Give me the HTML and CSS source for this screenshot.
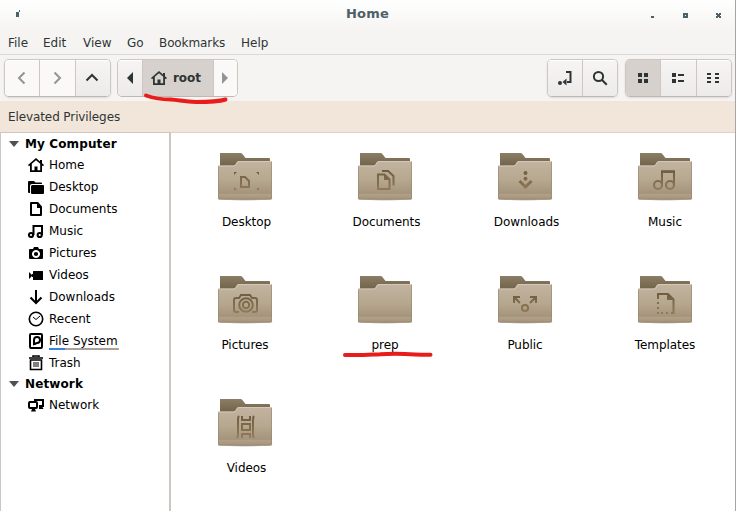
FILE: index.html
```
<!DOCTYPE html>
<html lang="en">
<head>
<meta charset="utf-8">
<title>Home</title>
<link rel="stylesheet" href="styles.css">
</head>
<body>
<svg class="defs" width="0" height="0" aria-hidden="true">
  <defs>
    <linearGradient id="front" x1="0" y1="0" x2="0" y2="1"><stop offset="0" stop-color="#c2b4a0"/><stop offset=".5" stop-color="#b6a78f"/><stop offset=".84" stop-color="#a5947b"/><stop offset=".87" stop-color="#b0a087"/><stop offset="1" stop-color="#a59379"/></linearGradient>
    <linearGradient id="back" x1="0" y1="0" x2="0" y2="1"><stop offset="0" stop-color="#8c7d66"/><stop offset=".3" stop-color="#716349"/><stop offset="1" stop-color="#716349"/></linearGradient>
    <linearGradient id="ink" gradientUnits="userSpaceOnUse" x1="0" y1="20" x2="0" y2="42"><stop offset="0" stop-color="#6f5c40"/><stop offset="1" stop-color="#937d5c"/></linearGradient>
    <radialGradient id="shade"><stop offset="0" stop-color="#555" stop-opacity=".7"/><stop offset=".75" stop-color="#666" stop-opacity=".4"/><stop offset="1" stop-color="#888" stop-opacity="0"/></radialGradient>
  </defs>
  <symbol id="folder" viewBox="0 0 60 54">
    <ellipse cx="30" cy="49" rx="30" ry="1.800" fill="url(#shade)"/>
    <path d="M5 3h20.500q1 0 1.700.8L30.500 8H54q1 0 1 1v38H5z" fill="url(#back)"/>
    <path d="M3 16.500q0-1 1-1h14q1.800 0 2.600-1.500l1.200-2q.6-1 1.800-1H56q1 0 1 1v36q0 1.500-1.500 1.500h-51Q3 49.500 3 48z" fill="url(#front)"/>
    <path d="M3.500 16h15q1.800 0 2.600-1.500l1.200-2q.6-1 1.700-1h32" fill="none" stroke="#d6cbbb" stroke-width=".9"/>
    <path d="M3.500 16.500V48q0 1 1 1h51q1 0 1-1V12" fill="none" stroke="#94846b" stroke-width=".8" opacity=".7"/>
  </symbol>
  <symbol id="home" viewBox="0 0 16 16"><path d="M8 1 0 8l1 1.200 1-.8V15h12V8.400l1 .8L16 8l-2-1.800V3h-2v1.500zM8 3.200l4.200 3.600V13.200H9.500V9.500h-3v3.700H3.800V6.800z"/></symbol>
</svg>
<div class="window">
  <header class="titlebar">
    <svg class="pin" width="6" height="8" viewBox="0 0 6 8"><path d="M0 2h3v5H0zM3 0h1v2H3z" fill="#4d6068"/></svg>
    <h1>Home</h1>
    <div class="controls">
      <svg width="5" height="5"><path d="M1 3h3v2H1z"/></svg>
      <svg width="5" height="5"><path fill-rule="evenodd" d="M0 0h5v5H0zM2 2v1h1V2z"/></svg>
      <svg width="5" height="5"><path d="M0 0h2v1h1V0h2v2H4v1h1v2H3V4H2v1H0V3h1V2H0z"/></svg>
    </div>
  </header>
  <nav class="menubar"><span class="m-file">File</span><span class="m-edit">Edit</span><span class="m-view">View</span><span class="m-go">Go</span><span class="m-book">Bookmarks</span><span>Help</span></nav>
  <div class="toolbar">
    <div class="group nav">
      <button class="flat"><svg width="16" height="16"><path d="m10.500 2.500-5.500 5.500 5.500 5.500" class="line dim"/></svg></button>
      <button class="flat"><svg width="16" height="16"><path d="m5.500 2.500 5.500 5.500-5.500 5.500" class="line dim"/></svg></button>
      <button><svg width="16" height="16"><path d="m1.500 10.500 5.500-5.500 5.500 5.500" class="line"/></svg></button>
    </div>
    <div class="group path">
      <button class="arrow"><svg width="8" height="12"><path d="M7 0v12L1 6z"/></svg></button>
      <button class="active crumb"><svg width="16" height="16"><use href="#home"/></svg><b>root</b></button>
      <button class="arrow flat"><svg width="8" height="12"><path d="M0 0v12l6-6z" fill="#929595"/></svg></button>
    </div>
    <div class="group tools">
      <button><svg width="16" height="16"><circle cx="3" cy="13" r="2"/><path d="M9 2h4.500v10H10" class="line"/><path d="m5.500 12 4-3.500v7z"/></svg></button>
      <button><svg width="16" height="16"><circle cx="6.500" cy="6.500" r="4.600" class="line"/><path d="m10 10 4.800 4.800" class="line"/></svg></button>
    </div>
    <div class="group views">
      <button class="active"><svg width="16" height="16"><path d="M3 3h4v4H3zm6 0h4v4H9zM3 9h4v4H3zm6 0h4v4H9z"/></svg></button>
      <button><svg width="16" height="16"><path d="M2 3h4v4H2zm6 1h6v2H8zM2 9h4v4H2zm6 1h6v2H8z"/></svg></button>
      <button><svg width="16" height="16"><path d="M1 3h4v2H1zm8 0h4v2H9zM1 7h4v2H1zm8 0h4v2H9zm-8 4h4v2H1zm8 0h4v2H9z"/></svg></button>
    </div>
  </div>
  <div class="infobar">Elevated Privileges</div>
  <div class="content">
    <aside>
      <h2><i></i>My Computer</h2>
      <ul>
        <li><svg width="16" height="16"><use href="#home"/></svg>Home</li>
        <li><svg width="16" height="16"><path d="M0 3q0-1 1-1h5l1.500 1.500H13q1 0 1 1V5H4Q2 5 2 7v7H1q-1 0-1-1zM3 7.500Q3 6 4.500 6H15q1 0 1 1v7q0 1-1 1H4q-1 0-1-1z"/></svg>Desktop</li>
        <li><svg width="16" height="16"><path fill-rule="evenodd" d="M3 1h7l4 4.500V14q0 1-1 1H3q-1 0-1-1V2q0-1 1-1zm1 2v10h8V7H9V3z"/></svg>Documents</li>
        <li><svg width="16" height="16"><path d="M5.500 12V3H14v9" class="line"/><circle cx="3" cy="12" r="2.100" class="line"/><circle cx="11.700" cy="12" r="2.100" class="line"/></svg>Music</li>
        <li><svg width="16" height="16"><path fill-rule="evenodd" d="M2 4h3l1-2h4l1 2h3q1 0 1 1v8q0 1-1 1H2q-1 0-1-1V5q0-1 1-1zm6 1a4 4 0 1 0 .01 0z"/><circle cx="8" cy="9" r="2.100"/></svg>Pictures</li>
        <li><svg width="16" height="16"><path d="M1 5l3 3V7h1V4.500Q5 4 5.500 4h9q.5 0 .5.500v8q0 .5-.5.500h-9q-.5 0-.5-.5V10H4V9l-3 3z"/></svg>Videos</li>
        <li><svg width="16" height="16"><path d="M8 1v12M2.500 8.500 8 14l5.500-5.500" class="line"/></svg>Downloads</li>
        <li><svg width="16" height="16"><circle cx="8" cy="8" r="6.700" class="line thin"/><path d="m5 6 3 2.500 4-3.500" class="line fine"/></svg>Recent</li>
        <li><svg width="16" height="16"><rect x="2" y="1" width="12" height="14" rx="1" class="line"/><path d="M6 11V7a3 3 0 1 1 3 3z" class="line"/><path d="M5 9v3h3z"/></svg><span class="usage">File System</span></li>
        <li><svg width="16" height="16"><path d="M1 3h14M5 2V1h6v1M2.500 5v9.500h11V5z" class="line thin"/><path d="M6 7v5M8 7v5M10 7v5" class="line fine"/></svg>Trash</li>
      </ul>
      <h2><i></i>Network</h2>
      <ul><li><svg width="16" height="16"><path d="M7 5V3h8v6h-4" class="line"/><rect x="1" y="5" width="8" height="6" rx="1" class="line"/><path d="M4 12h3l1 2.500H3zM11 9h3l1.500 3H11z"/></svg>Network</li></ul>
    </aside>
    <main>
      <figure><svg width="60" height="54"><use href="#folder"/><g class="ink"><path d="M26 27h4l4 4v6h-8z"/><path d="M19 25v-3h3zM41 22h3v3zM19 37v3h3zM44 37v3h-3z" class="solid"/></g></svg><figcaption>Desktop</figcaption></figure>
      <figure><svg width="60" height="54"><use href="#folder"/><g class="ink"><path d="M23 24.500h6.500l5 5V39H23zM27 21h6l5.500 5v9.500"/><path d="M29 24v6h6z" class="solid"/></g></svg><figcaption>Documents</figcaption></figure>
      <figure><svg width="60" height="54"><use href="#folder"/><g class="ink"><circle cx="30.500" cy="23" r="2" class="solid"/><circle cx="30.500" cy="28.700" r="2" class="solid"/><path d="m24.500 31 6 6 6-6" class="thick"/></g></svg><figcaption>Downloads</figcaption></figure>
      <figure class="left"><svg width="60" height="54"><use href="#folder"/><g class="ink"><path d="M27 35V21.200h12V35M27 22h12"/><circle cx="23" cy="35" r="4"/><circle cx="35" cy="35" r="4"/></g></svg><figcaption>Music</figcaption></figure>
      <figure class="left"><svg width="60" height="54"><use href="#folder"/><g class="ink"><path d="M24 39h-3q-2 0-2-2V27q0-2 2-2h3l2-3h9l2 3h3q2 0 2 2v10q0 2-2 2h-3"/><circle cx="31" cy="32" r="6.800"/><circle cx="31" cy="32" r="3.200"/></g></svg><figcaption>Pictures</figcaption></figure>
      <figure class="left"><svg width="60" height="54"><use href="#folder"/></svg><figcaption>prep</figcaption></figure>
      <figure class="left"><svg width="60" height="54"><use href="#folder"/><g class="ink"><circle cx="30" cy="35" r="3.100"/><path d="m25 30-6-6M19 30v-6h6M35 30l6-6M35 24h6v6"/></g></svg><figcaption>Public</figcaption></figure>
      <figure class="left"><svg width="60" height="54"><use href="#folder"/><g class="ink"><path d="M23 26v-5h10l5.500 5.500V40H36"/><path d="M32 20v7h7zM22 29h2v2h-2zm0 5h2v2h-2zm0 5h2v2h-2zm4 0h2v2h-2zm5 0h2v2h-2z" class="solid"/></g></svg><figcaption>Templates</figcaption></figure>
      <figure><svg width="60" height="54"><use href="#folder"/><g class="ink"><path d="M24 20q-1 1-1 4v14q0 3-1 4M39 20q-1 1-1 4v14q0 3 1 4M27 20v4h8v-4M27 42v-4h8v4M27 28h8v6h-8z"/></g></svg><figcaption>Videos</figcaption></figure>
    </main>
  </div>
  <svg class="marks" width="736" height="511"><path d="M146 95.500c8 3 17 4 25 4 8 .5 14 2.500 25 2.500 12 0 23-.5 29.500-2.500"/><path d="M345 355c17 .5 24-.3 35-.8 10-.7 23-.6 35 .2 6 .4 11 .5 15.500.4"/></svg>
</div>
</body>
</html>
```
FILE: styles.css
```
* { box-sizing: border-box; }
body { margin: 0; font: 12px/16px "DejaVu Sans", sans-serif; color: #2e3436; overflow: hidden; }
.defs, .marks { position: absolute; top: 0; left: 0; }
.window { position: relative; display: flex; flex-direction: column; width: 736px; height: 511px; background: #f5f4f2; border-right: 1px solid #a5a5a5; }
.titlebar, .menubar, .toolbar, .infobar { flex: none; }
.titlebar { display: flex; align-items: center; height: 30px; padding: 0 14px 2px 16px; background: linear-gradient(#fff, #f5f4f2); }
.titlebar h1 { flex: 1; margin: 0; padding-left: 63px; text-align: center; font-size: 13px; letter-spacing: .2px; line-height: 16px; color: #4d6068; }
.controls { display: flex; gap: 28px; padding-top: 2px; fill: #4d6068; }
.menubar { display: flex; height: 25px; padding: 5px 8px 0; border-bottom: 1px solid #dbd9d6; }
.m-file { width: 35px; }
.m-edit { width: 40px; }
.m-view { width: 44px; }
.m-go { width: 32px; }
.m-book { width: 82px; letter-spacing: -.1px; }
.toolbar { display: flex; height: 46px; padding: 4px 3px 4px 4px; }
.group { display: flex; height: 38px; border: 1px solid #cdc7c2; border-bottom-color: #bfb8b1; border-radius: 5px; overflow: hidden; box-shadow: 0 1px 2px #0000001c; }
.nav, .views { width: 107px; }
.path { width: 121px; margin-left: 6px; box-shadow: none; }
.tools { width: 71px; margin-left: auto; }
.views { margin-left: 7px; }
button { flex: 1; display: flex; align-items: center; justify-content: center; padding: 0; border: 0; background: linear-gradient(#f6f5f4, #edebe9); color: inherit; font: inherit; fill: #2e3436; box-shadow: inset 0 1px #fff; }
button + button { border-left: 1px solid #cdc7c2; }
button.flat { background: #faf9f8; }
button.active { background: #d6d1cd; box-shadow: none; }
button.arrow { flex: 0 0 24px; }
button.crumb { gap: 6px; padding-right: 4px; }
.line { fill: none; stroke: #2e3436; stroke-width: 2; }
.dim { stroke: #929595; }
.thin { stroke-width: 1.6; }
.fine { stroke-width: 1; }
.infobar { height: 32px; padding: 8px; letter-spacing: -.1px; background: #f2e6da; border-bottom: 1px solid #ddd3c9; }
.content { display: flex; flex: 1; min-height: 0; background: #fff; color: #000; }
aside { flex: none; width: 171px; padding-top: 1px; border-left: 1px solid #cdc7c2; border-right: 2px solid #cdc7c2; border-top: 1px solid #cdc7c2; margin-top: -1px; }
h2 { display: flex; align-items: center; height: 20px; margin: 0; padding-left: 8px; font-size: 12px; letter-spacing: .12px; }
h2 i { width: 10px; margin-right: 6px; border: 5px solid transparent; border-top: 6px solid #505050; border-bottom: 0; }
ul { list-style: none; margin: 0; padding: 0 0 0 27px; }
li { display: flex; align-items: center; gap: 5px; height: 22px; }
li .line { stroke: #000; }
.usage { height: 18px; padding: 1px 1px 0 0; background: linear-gradient(90deg, #3584e4 16px, #aaa098 16px) bottom / 100% 2px no-repeat; }
main { display: grid; grid-template-columns: repeat(4, 140px); grid-auto-rows: 123px; align-content: start; padding: 17px 0 0 4px; }
figure { display: flex; flex-direction: column; align-items: center; gap: 10px; margin: 0; }
figcaption { padding-left: 3px; letter-spacing: -.05px; }
.left figcaption { padding: 0; }
.ink { fill: none; stroke: url(#ink); stroke-width: 2; }
.solid { fill: url(#ink); stroke: none; }
.thick { stroke-width: 3; }
.marks { fill: none; stroke: #e91c1c; stroke-width: 4; stroke-linecap: round; pointer-events: none; }
```
